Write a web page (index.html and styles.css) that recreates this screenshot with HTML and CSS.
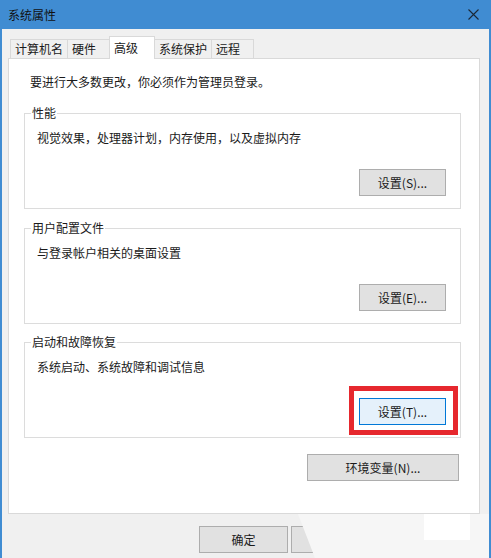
FILE: index.html
```html
<!DOCTYPE html>
<html lang="zh-CN">
<head>
<meta charset="utf-8">
<title>系统属性</title>
<link rel="stylesheet" href="styles.css">
</head>
<body>
<div class="window">
  <div class="titlebar">
    <span class="title">系统属性</span>
    <svg class="close" width="11" height="11" viewBox="0 0 11 11"><path d="M0.5 0.5 L10.5 10.5 M10.5 0.5 L0.5 10.5" stroke="#1b2836" stroke-width="1.1" fill="none"/></svg>
  </div>
  <div class="client">
    <div class="tabs">
      <div class="tab">计算机名</div>
      <div class="tab">硬件</div>
      <div class="tab active">高级</div>
      <div class="tab">系统保护</div>
      <div class="tab">远程</div>
    </div>
    <div class="panel">
      <div class="intro">要进行大多数更改，你必须作为管理员登录。</div>
      <fieldset class="group">
        <legend>性能</legend>
        <div class="desc">视觉效果，处理器计划，内存使用，以及虚拟内存</div>
        <div class="btnrow"><button class="btn">设置(S)...</button></div>
      </fieldset>
      <fieldset class="group g2">
        <legend>用户配置文件</legend>
        <div class="desc">与登录帐户相关的桌面设置</div>
        <div class="btnrow"><button class="btn">设置(E)...</button></div>
      </fieldset>
      <fieldset class="group g3">
        <legend>启动和故障恢复</legend>
        <div class="desc">系统启动、系统故障和调试信息</div>
        <div class="btnrow">
          <div class="focuswrap">
            <button class="btn focus">设置(T)...</button>
            <span class="highlight"></span>
          </div>
        </div>
      </fieldset>
      <div class="envrow"><button class="btn wide">环境变量(N)...</button></div>
    </div>
    <div class="footer">
      <button class="btn fbtn">确定</button>
      <button class="btn fbtn">取消</button>
      <button class="btn fbtn">应用(A)</button>
    </div>
  </div>
  <div class="erase"><div class="erase-box"></div></div>
</div>
</body>
</html>
```

FILE: styles.css
```css
html, body {
  margin: 0;
  padding: 0;
}

body {
  width: 491px;
  height: 558px;
  overflow: hidden;
  background: #f0f0f0;
  color: #1a1a1a;
  font-family: "Noto Sans CJK SC", "Microsoft YaHei", sans-serif;
  font-size: 12px;
}

.window {
  position: relative;
  height: 558px;
  display: flex;
  flex-direction: column;
}

.titlebar {
  height: 29px;
  flex: none;
  background: #408cd2;
  display: flex;
  align-items: center;
  justify-content: space-between;
  padding: 0 12px 0 8px;
}

.title {
  line-height: 16px;
  color: #111;
}

.close {
  display: block;
  margin-top: -1px;
}

.client {
  flex: 1;
  display: flex;
  flex-direction: column;
  border-left: 2px solid #408cd2;
  border-right: 2px solid #408cd2;
  padding: 7px 9px 0 6px;
}

.tabs {
  display: flex;
  align-items: flex-start;
  padding-left: 2px;
}

.tab {
  margin-top: 3px;
  margin-left: -1px;
  height: 18px;
  line-height: 18px;
  min-width: 33px;
  padding: 0 4px;
  border: 1px solid #d9d9d9;
  border-bottom: none;
  background: #f0f0f0;
  white-space: nowrap;
}

.tab:first-child {
  margin-left: 0;
}

.tab.active {
  margin-top: 0;
  height: 22px;
  line-height: 21px;
  min-width: 36px;
  background: #fff;
  position: relative;
  z-index: 1;
}

.panel {
  margin-top: -1px;
  background: #fff;
  border: 1px solid #d9d9d9;
  padding: 15px 18px 32px 15px;
}

.intro {
  margin-left: 6px;
  line-height: 16px;
}

.group {
  margin: 15px 0 0;
  padding: 9px 14px 12px 0;
  border: 1px solid #dcdcdc;
  min-width: 0;
}

.group.g2 {
  margin-top: 11px;
}

.group.g3 {
  margin-top: 10px;
}

.group legend {
  margin-left: 6px;
  padding: 0 1px;
  line-height: 16px;
}

.desc {
  padding-left: 12px;
  line-height: 16px;
}

.btnrow {
  display: flex;
  justify-content: flex-end;
  margin-top: 23px;
}

.btn {
  box-sizing: border-box;
  width: 87px;
  height: 27px;
  padding: 0;
  margin: 0;
  border: 1px solid #adadad;
  border-radius: 0;
  background: #e1e1e1;
  color: #1a1a1a;
  font-family: inherit;
  font-size: 12px;
  line-height: 16px;
  display: flex;
  align-items: center;
  justify-content: center;
}

.btn.focus {
  background: #e5f1fb;
  border-color: #0078d7;
}

.focuswrap {
  position: relative;
}

.highlight {
  position: absolute;
  top: -12px;
  right: -12px;
  bottom: -10px;
  left: -10px;
  border: 5px solid #e6282e;
}

.envrow {
  display: flex;
  justify-content: flex-end;
  margin-top: 16px;
  padding-right: 2px;
}

.btn.wide {
  width: 152px;
}

.footer {
  display: flex;
  gap: 3px;
  padding: 12px 0 0 191px;
}

.btn.fbtn {
  width: 89px;
}

.erase {
  position: absolute;
  left: 298px;
  top: 514px;
  width: 191px;
  height: 44px;
  background: #f6f6f6;
  clip-path: polygon(0 0, 100% 0, 100% 100%, 17px 100%);
}

.erase-box {
  position: absolute;
  left: 126px;
  top: 0;
  width: 46px;
  height: 26px;
  background: #fff;
}
```
